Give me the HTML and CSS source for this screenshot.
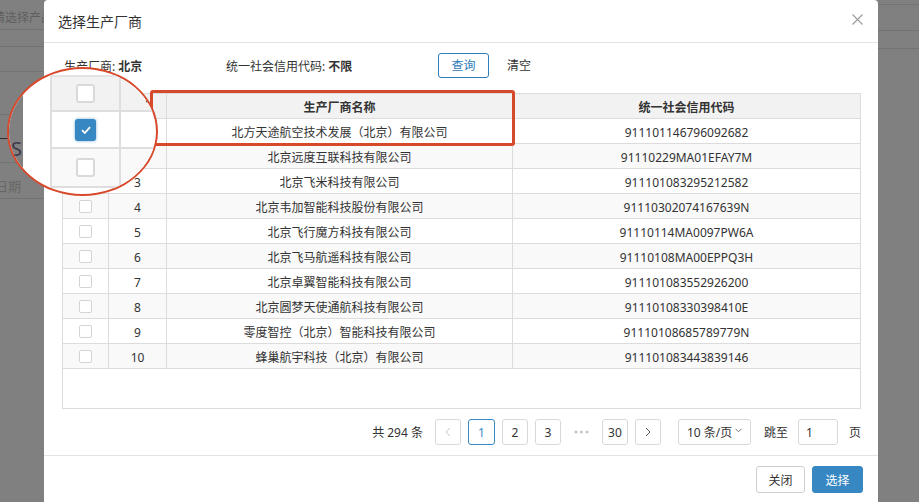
FILE: index.html
```html
<!DOCTYPE html>
<html lang="zh-CN">
<head>
<meta charset="utf-8">
<title>选择生产厂商</title>
<link rel="stylesheet" href="styles.css">
</head>
<body>
<div class="page">
  <aside class="bg-left">
    <div class="bg-row h30"><span class="bg-text">请选择产品</span></div>
    <div class="bg-row h17"></div>
    <div class="bg-row h25"></div>
    <div class="bg-row h43"></div>
    <div class="bg-tab"></div>
    <div class="bg-row h24"></div>
    <div class="bg-date">日期</div>
    <div class="bg-line"></div>
  </aside>

  <section class="modal">
    <header class="modal-header">
      <span class="title">选择生产厂商</span>
      <svg class="close" width="11" height="11" viewBox="0 0 11 11"><path d="M0.5 0.5L10.5 10.5M10.5 0.5L0.5 10.5" stroke="#9a9a9a" stroke-width="1.1" fill="none"/></svg>
    </header>
    <div class="modal-body">
      <div class="filter">
        <div class="field f1">生产厂商: <b>北京</b></div>
        <div class="field f2">统一社会信用代码: <b>不限</b></div>
        <button class="btn-query">查询</button>
        <span class="btn-clear">清空</span>
      </div>

      <div class="table-wrap">
        <div class="row head">
          <div class="cell"><span class="cb"></span></div>
          <div class="cell">序号</div>
          <div class="cell">生产厂商名称</div>
          <div class="cell">统一社会信用代码</div>
        </div>
        <div class="row"><div class="cell"><span class="cb"></span></div><div class="cell">1</div><div class="cell">北方天途航空技术发展（北京）有限公司</div><div class="cell">911101146796092682</div></div>
        <div class="row even"><div class="cell"><span class="cb"></span></div><div class="cell">2</div><div class="cell">北京远度互联科技有限公司</div><div class="cell">91110229MA01EFAY7M</div></div>
        <div class="row"><div class="cell"><span class="cb"></span></div><div class="cell">3</div><div class="cell">北京飞米科技有限公司</div><div class="cell">911101083295212582</div></div>
        <div class="row even"><div class="cell"><span class="cb"></span></div><div class="cell">4</div><div class="cell">北京韦加智能科技股份有限公司</div><div class="cell">91110302074167639N</div></div>
        <div class="row"><div class="cell"><span class="cb"></span></div><div class="cell">5</div><div class="cell">北京飞行魔方科技有限公司</div><div class="cell">91110114MA0097PW6A</div></div>
        <div class="row even"><div class="cell"><span class="cb"></span></div><div class="cell">6</div><div class="cell">北京飞马航遥科技有限公司</div><div class="cell">91110108MA00EPPQ3H</div></div>
        <div class="row"><div class="cell"><span class="cb"></span></div><div class="cell">7</div><div class="cell">北京卓翼智能科技有限公司</div><div class="cell">911101083552926200</div></div>
        <div class="row even"><div class="cell"><span class="cb"></span></div><div class="cell">8</div><div class="cell">北京圆梦天使通航科技有限公司</div><div class="cell">91110108330398410E</div></div>
        <div class="row"><div class="cell"><span class="cb"></span></div><div class="cell">9</div><div class="cell">零度智控（北京）智能科技有限公司</div><div class="cell">91110108685789779N</div></div>
        <div class="row even"><div class="cell"><span class="cb"></span></div><div class="cell">10</div><div class="cell">蜂巢航宇科技（北京）有限公司</div><div class="cell">911101083443839146</div></div>
      </div>

      <div class="pager">
        <span class="total">共 294 条</span>
        <div class="pages">
          <span class="pbtn disabled"><svg width="6" height="10" viewBox="0 0 6 10"><path d="M5 1L1 5L5 9" stroke="#c4c4c4" fill="none" stroke-width="1"/></svg></span>
          <span class="pbtn active w27">1</span>
          <span class="pbtn">2</span>
          <span class="pbtn">3</span>
          <span class="dots"><svg width="15" height="4" viewBox="0 0 15 4"><circle cx="2" cy="2" r="1.6" fill="#c8c8c8"/><circle cx="7.5" cy="2" r="1.6" fill="#c8c8c8"/><circle cx="13" cy="2" r="1.6" fill="#c8c8c8"/></svg></span>
          <span class="pbtn">30</span>
          <span class="pbtn"><svg width="6" height="10" viewBox="0 0 6 10"><path d="M1 1L5 5L1 9" stroke="#555" fill="none" stroke-width="1"/></svg></span>
        </div>
        <span class="size-select">10 条/页<svg width="7" height="5" viewBox="0 0 7 5"><path d="M0.5 0.8L3.5 3.8L6.5 0.8" stroke="#777" fill="none" stroke-width="1"/></svg></span>
        <span class="jump">跳至</span>
        <span class="jump-input">1</span>
        <span class="jump-unit">页</span>
      </div>
    </div>
    <footer class="modal-footer">
      <button class="btn-close">关闭</button>
      <button class="btn-primary">选择</button>
    </footer>
  </section>

  <aside class="bg-right">
    <div class="bg-row h5"></div>
    <div class="bg-row h26"></div>
    <div class="bg-row h18"></div>
  </aside>

  <div class="highlight"></div>

  <div class="magnifier">
    <div class="mag-band"><span class="mag-title">SI</span></div>
    <div class="mag-gap"></div>
    <div class="mag-table">
      <div class="mrow mhead">
        <div class="mcell"><span class="mcb"></span></div>
        <div class="mcell mtext">序号</div>
      </div>
      <div class="mrow">
        <div class="mcell"><span class="mcb checked"><svg width="12" height="10" viewBox="0 0 12 10"><path d="M2 5.2L4.8 8L10 2.2" stroke="#fff" stroke-width="1.8" fill="none"/></svg></span></div>
        <div class="mcell"></div>
      </div>
      <div class="mrow meven">
        <div class="mcell"><span class="mcb"></span></div>
        <div class="mcell"></div>
      </div>
    </div>
  </div>
</div>
</body>
</html>
```

FILE: styles.css
```css
* { box-sizing: border-box; }
body { margin: 0; }

.page {
  width: 919px;
  height: 502px;
  position: relative;
  overflow: hidden;
  display: flex;
  align-items: flex-start;
  background: #808080;
  font-family: "Noto Sans", "Noto Sans CJK SC", sans-serif;
  color: #333;
}

/* background page (dimmed) */
.bg-left { width: 44px; flex: none; overflow: hidden; }
.bg-right { width: 41px; flex: none; }
.bg-row { border-bottom: 1px solid #737373; }
.h5 { height: 5px; }
.h17 { height: 17px; }
.h18 { height: 18px; }
.h24 { height: 24px; }
.h25 { height: 25px; }
.h26 { height: 26px; }
.h30 { height: 30px; }
.h43 { height: 43px; }
.bg-text {
  display: block;
  margin-left: -7px;
  padding-top: 11px;
  font-size: 12px;
  line-height: 14px;
  color: #5f5f5f;
  white-space: nowrap;
}
.bg-tab { width: 8px; height: 1px; margin-top: 23px; background: #2e2e2e; }
.bg-date {
  margin-top: 16px;
  margin-left: -5px;
  font-size: 13px;
  line-height: 15px;
  color: #676767;
  white-space: nowrap;
}
.bg-line { height: 1px; margin-top: 4px; background: #737373; }

/* modal */
.modal {
  width: 834px;
  height: 520px;
  flex: none;
  background: #fff;
  border-radius: 4px 4px 0 0;
  display: flex;
  flex-direction: column;
}
.modal-header {
  height: 43px;
  flex: none;
  border-bottom: 1px solid #e3e3e3;
  display: flex;
  align-items: center;
  justify-content: space-between;
  padding: 1px 15px 0 14px;
}
.title { font-size: 14px; line-height: 20px; color: #333; }
.close { display: block; margin-top: -4px; }

.modal-body { padding: 0 17px 0 18px; }
.filter {
  display: flex;
  align-items: center;
  height: 25px;
  margin-top: 10px;
  font-size: 12px;
  line-height: 16px;
}
.field { padding-top: 3px; }
.field b { font-weight: 700; color: #333; }
.f1 { width: 164px; padding-left: 2px; }
.f2 { width: 212px; }
.btn-query {
  width: 51px;
  height: 25px;
  border: 1px solid #2f7db9;
  border-radius: 3px;
  background: #fff;
  color: #2f7db9;
  font: inherit;
  font-size: 12px;
  padding: 1px 0 0;
}
.btn-clear { margin-left: 18px; color: #333; padding-top: 1px; }

.table-wrap {
  margin-top: 15px;
  width: 799px;
  height: 316px;
  border: 1px solid #dcdcdc;
  font-size: 12px;
}
.row {
  display: grid;
  grid-template-columns: 46px 58px 346px 1fr;
  height: 25px;
  border-bottom: 1px solid #dcdcdc;
}
.row.even { background: #f9f9f9; }
.row.head { background: #f2f2f2; font-weight: 700; }
.cell {
  display: flex;
  align-items: center;
  justify-content: center;
  border-right: 1px solid #dcdcdc;
  line-height: 16px;
  padding-top: 3px;
  white-space: nowrap;
}
.cell:first-child { padding-top: 0; }
.cell:last-child { border-right: 0; }
.cb {
  width: 13px;
  height: 13px;
  border: 1px solid #d4d4d4;
  border-radius: 2px;
  background: #fff;
}

/* pagination */
.pager {
  margin-top: 10px;
  height: 26px;
  display: flex;
  align-items: center;
  justify-content: flex-end;
  font-size: 12px;
  color: #333;
}
.total { margin-right: 12px; }
.pages { display: flex; gap: 7px; align-items: center; }
.pbtn {
  width: 26px;
  height: 26px;
  border: 1px solid #d9d9d9;
  border-radius: 3px;
  display: flex;
  align-items: center;
  justify-content: center;
  background: #fff;
}
.pbtn.w27 { width: 27px; }
.pbtn.active { border-color: #3787c3; color: #3787c3; }
.dots {
  width: 27px;
  display: flex;
  justify-content: center;
  align-items: center;
}
.size-select {
  margin-left: 17px;
  width: 73px;
  height: 26px;
  border: 1px solid #d9d9d9;
  border-radius: 3px;
  display: flex;
  align-items: center;
  padding-left: 8px;
  gap: 3px;
}
.size-select svg { margin-top: -3px; }
.jump { margin-left: 13px; }
.jump-input {
  margin-left: 10px;
  width: 40px;
  height: 26px;
  border: 1px solid #d9d9d9;
  border-radius: 3px;
  display: flex;
  align-items: center;
  padding-left: 7px;
}
.jump-unit { margin-left: 11px; }

/* footer */
.modal-footer {
  margin-top: 10px;
  border-top: 1px solid #e3e3e3;
  padding: 10px 15px 0 0;
  display: flex;
  justify-content: flex-end;
  gap: 7px;
}
.btn-close, .btn-primary {
  height: 27px;
  border-radius: 3px;
  font: inherit;
  font-size: 12px;
  padding: 0;
}
.btn-close { width: 49px; border: 1px solid #cfcfcf; background: #fff; color: #333; }
.btn-primary { width: 51px; border: 1px solid #3787c3; background: #3787c3; color: #fff; }

/* annotations */
.highlight {
  position: absolute;
  left: 150px;
  top: 90px;
  width: 365px;
  height: 56px;
  border: 3px solid #d6492b;
  border-radius: 3px;
}
.magnifier {
  position: absolute;
  left: 7px;
  top: 67px;
  width: 151px;
  height: 129px;
  border: 2px solid #d8492c;
  border-radius: 50%;
  overflow: hidden;
  background: #fff;
  display: flex;
}
.mag-band { width: 14px; flex: none; background: #808080; overflow: hidden; }
.mag-title {
  display: block;
  padding-top: 69px;
  margin-left: 2px;
  font-size: 20px;
  line-height: 22px;
  color: #3c3748;
  white-space: nowrap;
}
.mag-gap { width: 27px; flex: none; }
.mag-table { padding-top: 6px; flex: none; }
.mrow {
  display: grid;
  grid-template-columns: 69px 85px;
  border-bottom: 2px solid #dedede;
  border-left: 2px solid #dedede;
  height: 37px;
}
.mrow.mhead { background: #f2f2f2; border-top: 2px solid #e4e4e4; }
.mrow.meven { background: #f9f9f9; height: 39px; }
.mcell {
  border-right: 2px solid #dedede;
  display: flex;
  align-items: center;
  justify-content: center;
}
.mtext { font-size: 17px; font-weight: 700; color: #333; }
.mcb {
  width: 19px;
  height: 19px;
  border: 2px solid #d9d9d9;
  border-radius: 3px;
  background: #fff;
}
.mcb.checked {
  width: 21px;
  height: 22px;
  border: 0;
  background: #3787c3;
  box-shadow: 0 0 3px rgba(55, 135, 195, 0.7);
  display: flex;
  align-items: center;
  justify-content: center;
}
```
